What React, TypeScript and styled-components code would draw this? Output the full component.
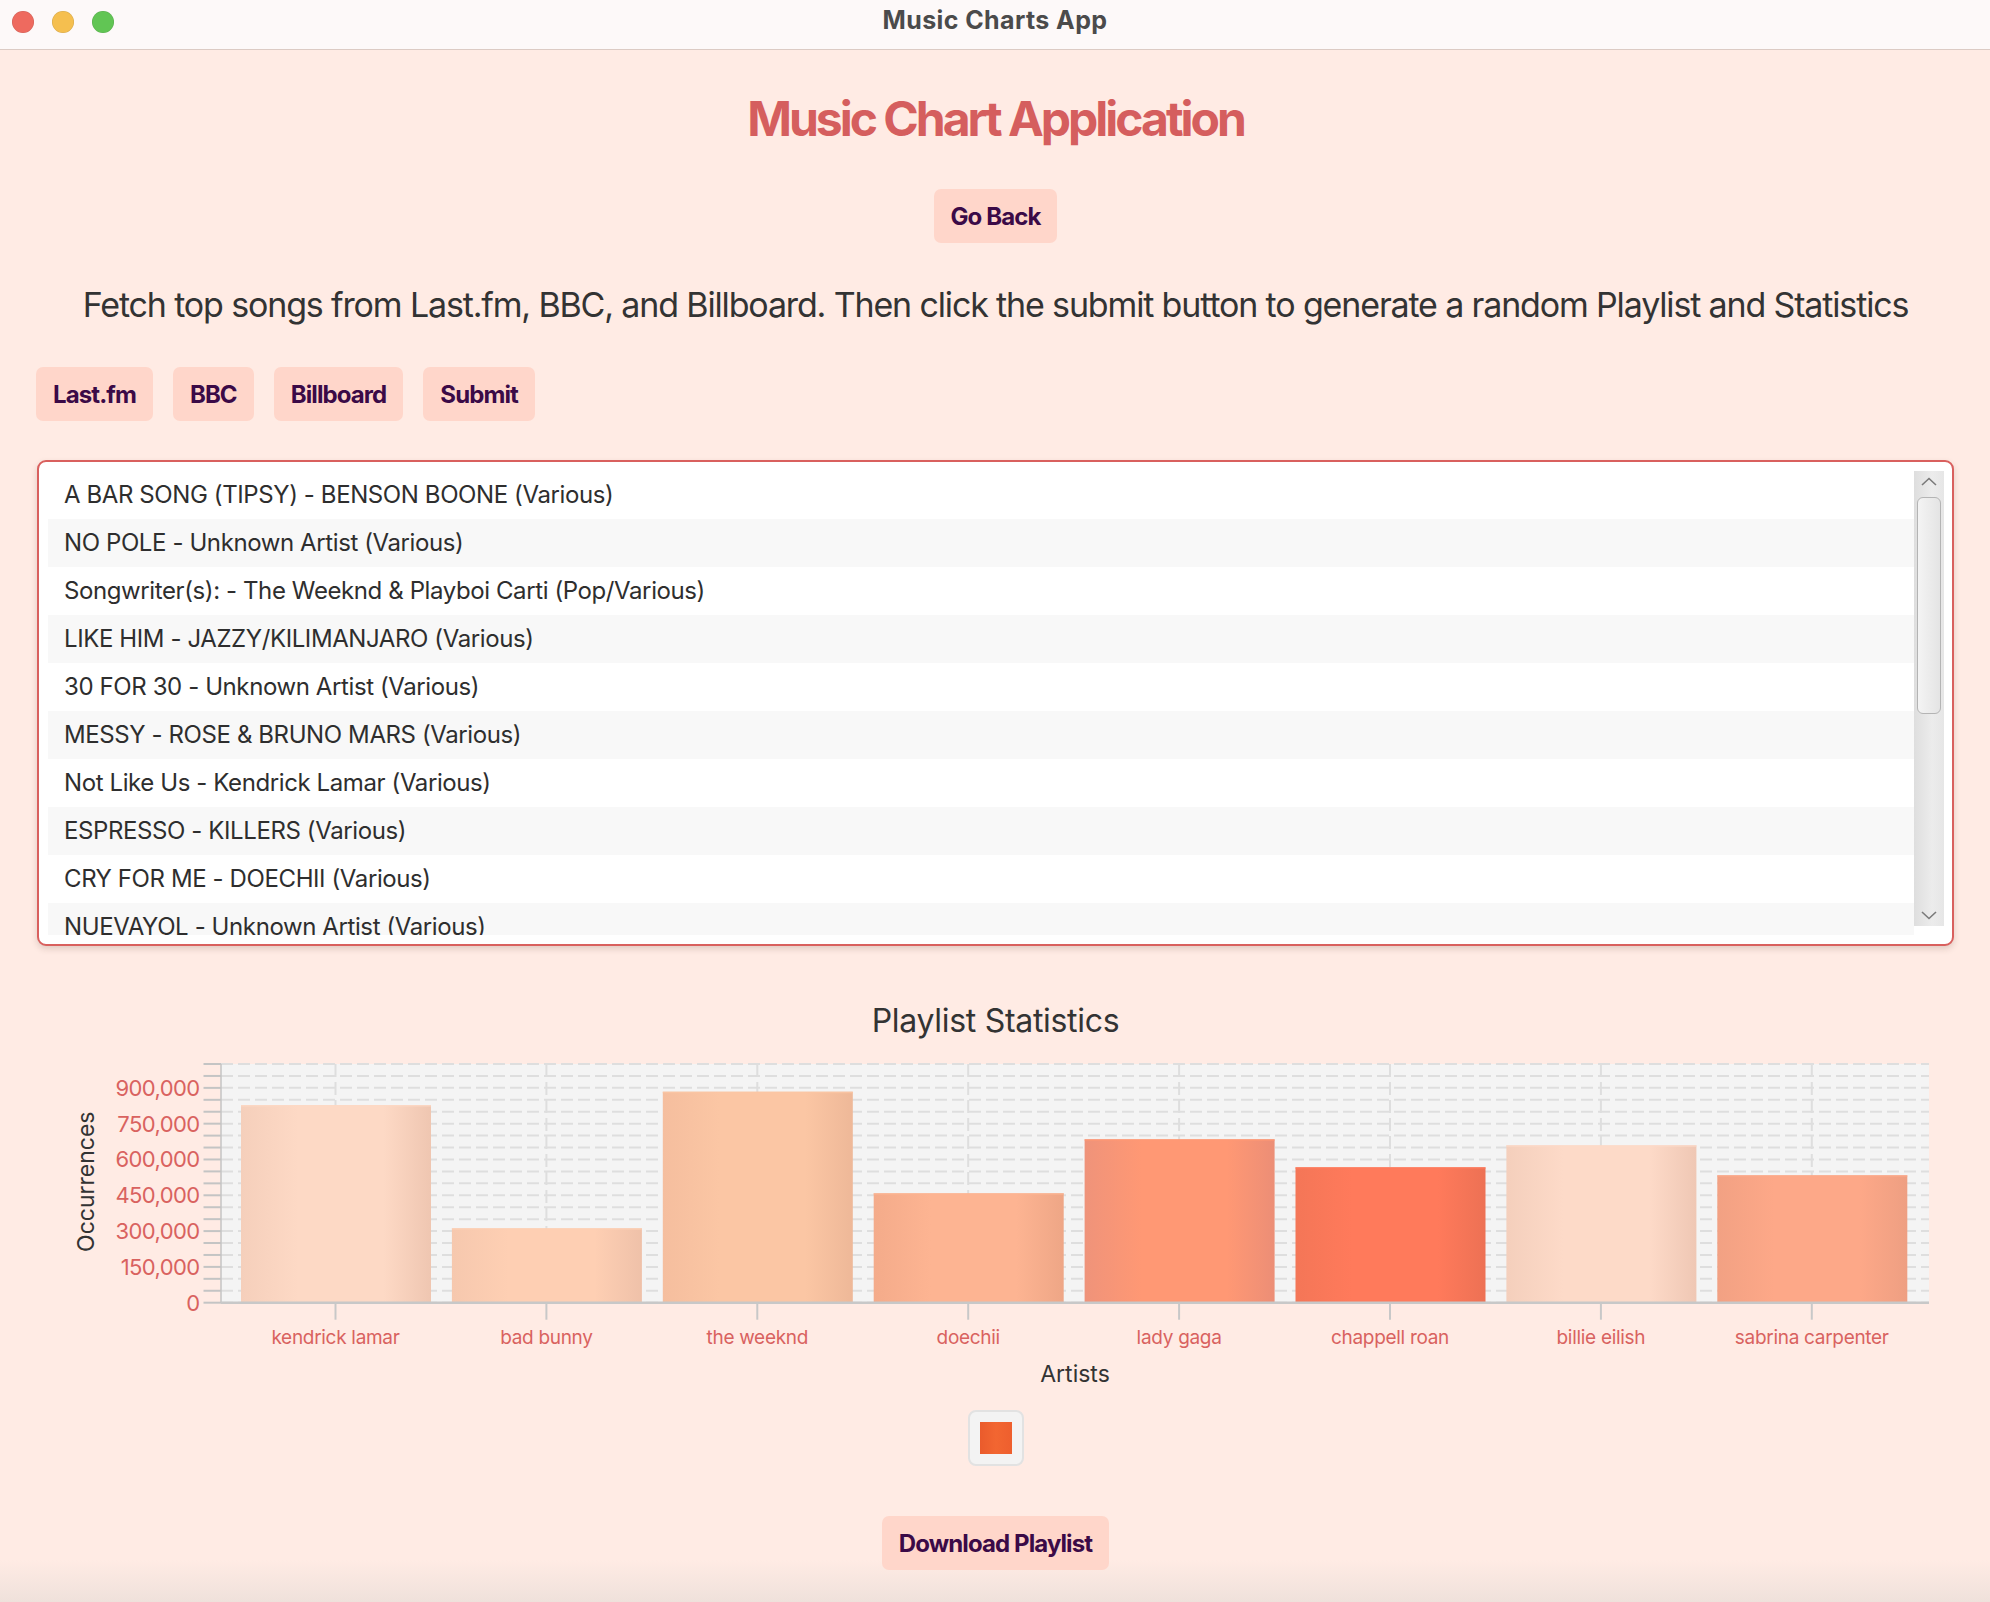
import React from "react";
import styled, { createGlobalStyle } from "styled-components";

const GlobalStyle = createGlobalStyle`
  html, body {
    margin: 0;
    padding: 0;
  }
  body {
    min-height: 1602px;
    font-family: Inter, "Noto Sans", "Liberation Sans", sans-serif;
    background: linear-gradient(to bottom, #ffebe4 0, #ffebe4 1560px, #efe1db 1602px);
  }
`;

const songs = [
  "A BAR SONG (TIPSY) - BENSON BOONE (Various)",
  "NO POLE - Unknown Artist (Various)",
  "Songwriter(s): - The Weeknd & Playboi Carti (Pop/Various)",
  "LIKE HIM - JAZZY/KILIMANJARO (Various)",
  "30 FOR 30 - Unknown Artist (Various)",
  "MESSY - ROSE & BRUNO MARS (Various)",
  "Not Like Us - Kendrick Lamar (Various)",
  "ESPRESSO - KILLERS (Various)",
  "CRY FOR ME - DOECHII (Various)",
  "NUEVAYOL - Unknown Artist (Various)",
];

const artists = [
  { name: "kendrick lamar", value: 828000, colors: ["#f5cfbb", "#fdd9c5", "#efc6b1"] },
  { name: "bad bunny", value: 311700, colors: ["#f6c8ae", "#fecfb3", "#efc1a9"] },
  { name: "the weeknd", value: 884000, colors: ["#f5be9e", "#fbc6a4", "#eeb898"] },
  { name: "doechii", value: 458300, colors: ["#f4ab8a", "#fdb492", "#eea686"] },
  { name: "lady gaga", value: 684500, colors: ["#ef937a", "#ff9874", "#ec8e76"] },
  { name: "chappell roan", value: 567200, colors: ["#f47657", "#ff7a5b", "#ed7154"] },
  { name: "billie eilish", value: 659400, colors: ["#f4cfbc", "#fddac8", "#efc7b4"] },
  { name: "sabrina carpenter", value: 533700, colors: ["#f2a183", "#fda888", "#ee9f82"] },
];

const Window = styled.div`
  display: flex;
  flex-direction: column;
  width: 1990px;
`;

const TitleBar = styled.header`
  display: grid;
  grid-template-columns: 1fr auto 1fr;
  align-items: start;
  height: 50px;
  box-sizing: border-box;
  background: #fdf9f9;
  border-bottom: 1px solid #dccbc4;
`;

const Lights = styled.div`
  display: flex;
  gap: 18px;
  padding: 11px 0 0 12px;
`;

const Light = styled.span<{ $color: string }>`
  width: 22px;
  height: 22px;
  border-radius: 50%;
  background: ${(p) => p.$color};
  box-shadow: inset 0 0 0 0.5px rgba(0, 0, 0, 0.12);
`;

const WindowTitle = styled.div`
  padding-top: 5px;
  font-size: 25px;
  line-height: 30px;
  font-weight: 700;
  color: #4b4b4b;
  letter-spacing: 0.4px;
`;

const Content = styled.main`
  display: flex;
  flex-direction: column;
  align-items: center;
  padding: 40px 36px 0 37px;
`;

const Heading = styled.h1`
  margin: 0;
  font-size: 48px;
  line-height: 58px;
  font-weight: 700;
  letter-spacing: -3px;
  color: #d55e5e;
`;

const ActionButton = styled.button<{ $top: number }>`
  margin-top: ${(p) => p.$top}px;
  height: 54px;
  padding: 0 17px;
  border: none;
  border-radius: 7px;
  background: #ffd6ca;
  color: #3b0a47;
  font-family: inherit;
  font-size: 24px;
  font-weight: 700;
  letter-spacing: -0.9px;
  cursor: pointer;
`;

const Description = styled.p`
  margin: 41px 0 0;
  font-size: 34px;
  line-height: 42px;
  color: #333333;
  letter-spacing: -1.15px;
  white-space: nowrap;
`;

const SourceBar = styled.div`
  align-self: stretch;
  display: flex;
  gap: 20px;
  margin-top: 41px;
  margin-left: -1px;
`;

const SongList = styled.section`
  align-self: stretch;
  display: flex;
  align-items: flex-start;
  margin-top: 39px;
  height: 486px;
  box-sizing: border-box;
  padding: 9px 8px 9px 9px;
  border: 2px solid #d9605e;
  border-radius: 9px;
  background: #ffffff;
  box-shadow: 0 3px 6px rgba(90, 60, 50, 0.18);
`;

const Rows = styled.ul`
  flex: 1;
  height: 464px;
  margin: 0;
  padding: 0;
  list-style: none;
  overflow: hidden;
`;

const Row = styled.li<{ $odd: boolean }>`
  height: 48px;
  padding-left: 16px;
  font-size: 24px;
  line-height: 48px;
  color: #2e2e2e;
  letter-spacing: -0.4px;
  background: ${(p) => (p.$odd ? "#f8f8f8" : "#ffffff")};
  white-space: nowrap;
`;

const ScrollTrack = styled.div`
  display: flex;
  flex-direction: column;
  align-items: center;
  width: 30px;
  height: 455px;
  background: linear-gradient(to right, #dedede, #ececec 60%, #e6e6e6);
`;

const ScrollArrow = styled.svg`
  flex: none;
  margin: 6px 0;
`;

const ScrollThumb = styled.div`
  width: 24px;
  height: 217px;
  box-sizing: border-box;
  margin-top: 5px;
  border: 1.5px solid #b4b4b4;
  border-radius: 6px;
  background: linear-gradient(to right, #f4f4f4, #e4e4e4);
`;

const TrackSpacer = styled.div`
  flex: 1;
`;

const ChartTitle = styled.h2`
  margin: 55px 0 0;
  font-size: 32px;
  line-height: 40px;
  font-weight: 400;
  color: #333333;
  letter-spacing: -0.3px;
`;

const ChartWrap = styled.div`
  align-self: stretch;
  margin: 9px -36px 0 -37px;
  height: 340px;
`;

const Legend = styled.div`
  display: flex;
  align-items: center;
  justify-content: center;
  width: 56px;
  height: 56px;
  box-sizing: border-box;
  margin-top: 20px;
  border: 2px solid #e2e2e2;
  border-radius: 8px;
  background: #f3f3f3;
`;

const LegendSwatch = styled.span`
  width: 32px;
  height: 32px;
  background: linear-gradient(to right, #ea5b2c, #f26631 50%, #ee5f2e);
`;

const PLOT_LEFT = 221;
const PLOT_RIGHT = 1929;
const PLOT_TOP = 14;
const PLOT_BOTTOM = 252.7;
const MAX = 1000000;
const STEP = 210.9;
const BAR_W = 190;

const yFor = (v: number) => PLOT_BOTTOM - (v / MAX) * (PLOT_BOTTOM - PLOT_TOP);

function StatsChart() {
  const minor = Array.from({ length: 21 }, (_, i) => i * 50000);
  const labelled = minor.filter((v) => v % 150000 === 0 && v <= 900000);
  return (
    <svg width="1990" height="340" viewBox="0 0 1990 340" fontFamily="Inter, 'Noto Sans', sans-serif">
      <defs>
        {artists.map((a, i) => (
          <linearGradient key={a.name} id={`bar${i}`} x1="0" x2="1" y1="0" y2="0">
            <stop offset="0" stopColor={a.colors[0]} />
            <stop offset="0.3" stopColor={a.colors[1]} />
            <stop offset="0.75" stopColor={a.colors[1]} />
            <stop offset="1" stopColor={a.colors[2]} />
          </linearGradient>
        ))}
      </defs>
      <rect x={PLOT_LEFT} y={PLOT_TOP} width={PLOT_RIGHT - PLOT_LEFT} height={PLOT_BOTTOM - PLOT_TOP} fill="#f4f4f4" />
      {minor.map((v) => (
        <line key={v} x1={PLOT_LEFT} x2={PLOT_RIGHT} y1={yFor(v)} y2={yFor(v)} stroke="#dedede" strokeWidth="2" strokeDasharray="12 5" />
      ))}
      {artists.map((a, i) => {
        const cx = 335.5 + STEP * i;
        return (
          <line key={a.name} x1={cx} x2={cx} y1={PLOT_TOP} y2={PLOT_BOTTOM} stroke="#dedede" strokeWidth="2" strokeDasharray="13 5" />
        );
      })}
      {artists.map((a, i) => {
        const x = 241 + STEP * i;
        const top = yFor(a.value);
        return (
          <g key={a.name}>
            <rect x={x} y={top} width={BAR_W} height={PLOT_BOTTOM - top} fill={`url(#bar${i})`} />
            <line x1={x} x2={x + BAR_W} y1={top + 0.75} y2={top + 0.75} stroke={a.colors[1]} strokeWidth="1.5" opacity="0.8" />
          </g>
        );
      })}
      <line x1={PLOT_LEFT} x2={PLOT_LEFT} y1={PLOT_TOP} y2={PLOT_BOTTOM} stroke="#c4c4c4" strokeWidth="1.5" />
      {minor.map((v) => (
        <line key={v} x1={203.5} x2={PLOT_LEFT} y1={yFor(v)} y2={yFor(v)} stroke="#c4c4c4" strokeWidth="2" />
      ))}
      {labelled.map((v) => (
        <text key={v} x={199.5} y={yFor(v) + 8} textAnchor="end" fontSize="22" fill="#d9625f" letterSpacing="-0.6">
          {v.toLocaleString("en-US")}
        </text>
      ))}
      <line x1={PLOT_LEFT} x2={PLOT_RIGHT} y1={PLOT_BOTTOM} y2={PLOT_BOTTOM} stroke="#c8c8c8" strokeWidth="2.5" />
      {artists.map((a, i) => {
        const cx = 335.5 + STEP * i;
        return (
          <g key={a.name}>
            <line x1={cx} x2={cx} y1={PLOT_BOTTOM} y2={PLOT_BOTTOM + 17} stroke="#c8c8c8" strokeWidth="2" />
            <text x={cx} y={294} textAnchor="middle" fontSize="19" fill="#d9625f" letterSpacing="-0.3">
              {a.name}
            </text>
          </g>
        );
      })}
      <text x={86} y={140} transform="rotate(-90 86 131.7)" textAnchor="middle" fontSize="23" fill="#333333">
        Occurrences
      </text>
      <text x={1075} y={332} textAnchor="middle" fontSize="23" fill="#333333">
        Artists
      </text>
    </svg>
  );
}

export default function App() {
  return (
    <>
      <GlobalStyle />
      <Window>
        <TitleBar>
          <Lights>
            <Light $color="#ee6a5f" />
            <Light $color="#f5bf4f" />
            <Light $color="#61c554" />
          </Lights>
          <WindowTitle>Music Charts App</WindowTitle>
          <span />
        </TitleBar>
        <Content>
          <Heading>Music Chart Application</Heading>
          <ActionButton $top={41}>Go Back</ActionButton>
          <Description>
            Fetch top songs from Last.fm, BBC, and Billboard. Then click the submit button to generate a random Playlist and Statistics
          </Description>
          <SourceBar>
            <ActionButton $top={0}>Last.fm</ActionButton>
            <ActionButton $top={0}>BBC</ActionButton>
            <ActionButton $top={0}>Billboard</ActionButton>
            <ActionButton $top={0}>Submit</ActionButton>
          </SourceBar>
          <SongList>
            <Rows>
              {songs.map((s, i) => (
                <Row key={s} $odd={i % 2 === 1}>
                  {s}
                </Row>
              ))}
            </Rows>
            <ScrollTrack>
              <ScrollArrow width="16" height="9" viewBox="0 0 16 9">
                <path d="M1 8 L8 1.5 L15 8" fill="none" stroke="#7a7a7a" strokeWidth="1.6" />
              </ScrollArrow>
              <ScrollThumb />
              <TrackSpacer />
              <ScrollArrow width="16" height="9" viewBox="0 0 16 9">
                <path d="M1 1 L8 7.5 L15 1" fill="none" stroke="#7a7a7a" strokeWidth="1.6" />
              </ScrollArrow>
            </ScrollTrack>
          </SongList>
          <ChartTitle>Playlist Statistics</ChartTitle>
          <ChartWrap>
            <StatsChart />
          </ChartWrap>
          <Legend>
            <LegendSwatch />
          </Legend>
          <ActionButton $top={50}>Download Playlist</ActionButton>
        </Content>
      </Window>
    </>
  );
}
